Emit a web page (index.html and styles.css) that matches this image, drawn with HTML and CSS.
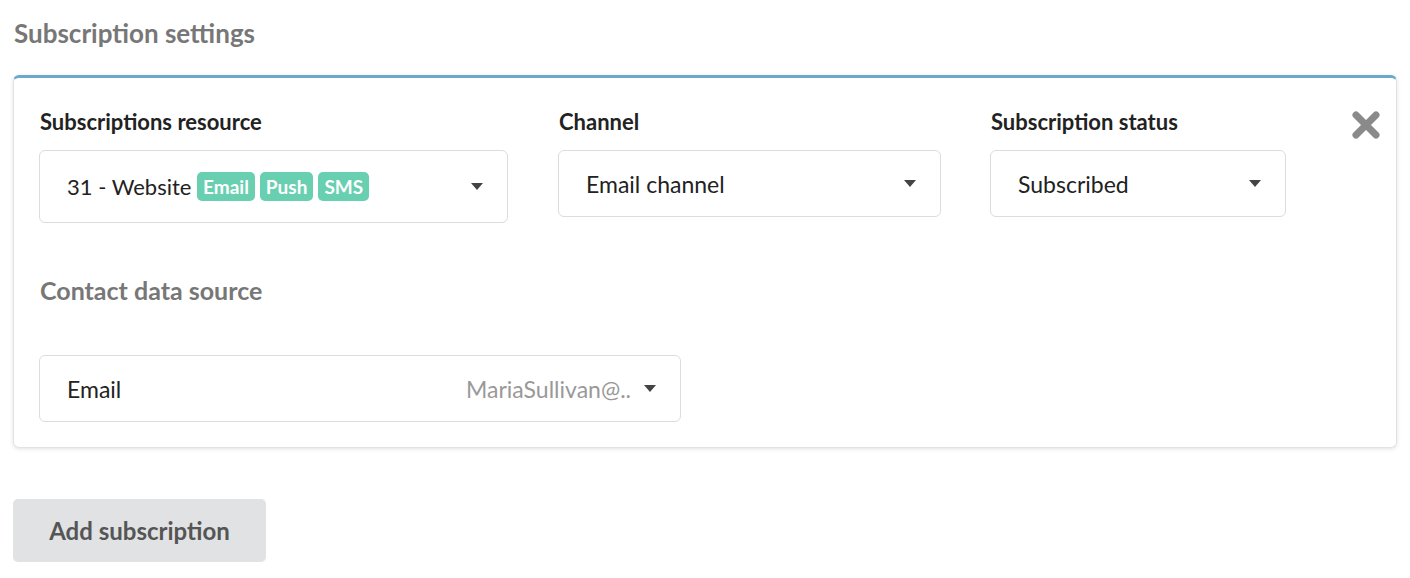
FILE: index.html
```html
<!DOCTYPE html>
<html lang="en">
<head>
    <meta charset="UTF-8">
    <title>Subscription settings</title>
    <link rel="stylesheet" href="styles.css">
</head>
<body>
    <div class="page">
        <h2 class="section-title">Subscription settings</h2>

        <div class="card">
            <div class="row">
                <div class="field field-resource">
                    <label class="field-label">Subscriptions resource</label>
                    <div class="select select-tall">
                        <span class="select-value">31 - Website
                            <span class="badge">Email</span><span class="badge">Push</span><span class="badge">SMS</span>
                        </span>
                        <span class="caret"></span>
                    </div>
                </div>
                <div class="field field-channel">
                    <label class="field-label">Channel</label>
                    <div class="select">
                        <span class="select-value">Email channel</span>
                        <span class="caret"></span>
                    </div>
                </div>
                <div class="field field-status">
                    <label class="field-label">Subscription status</label>
                    <div class="select">
                        <span class="select-value">Subscribed</span>
                        <span class="caret"></span>
                    </div>
                </div>
                <button class="remove" title="Remove">
                    <svg width="30" height="30" viewBox="0 0 30 30">
                        <path d="M5 5 L25 25 M25 5 L5 25" stroke="#8a8a8a" stroke-width="7" stroke-linecap="round"/>
                    </svg>
                </button>
            </div>

            <h3 class="sub-title">Contact data source</h3>

            <div class="select select-contact">
                <span class="select-value">Email</span>
                <span class="select-hint">MariaSullivan@..</span>
                <span class="caret caret-small"></span>
            </div>
        </div>

        <button class="btn-add">Add subscription</button>
    </div>
</body>
</html>
```

FILE: styles.css
```css
* {
    margin: 0;
    padding: 0;
    box-sizing: border-box;
}

body {
    background: #fff;
    font-family: 'Source Sans Pro', Lato, 'Liberation Sans', sans-serif;
    color: #222;
}

.page {
    padding: 18px 13px 16px 13px;
    width: 1410px;
}

.section-title {
    font-size: 26px;
    font-weight: 700;
    color: #777;
    line-height: 30px;
    margin-bottom: 27px;
    padding-left: 1px;
}

.card {
    border: 1px solid #e2e2e2;
    border-top: 3px solid #6aa8cc;
    border-radius: 6px;
    box-shadow: 0 1px 4px rgba(0, 0, 0, 0.12);
    padding: 32px 25px 25px 25px;
}

.row {
    display: flex;
    align-items: flex-start;
    gap: 50px;
    position: relative;
}

.field-resource { width: 469px; }
.field-channel { width: 383px; margin-right: -1px; }
.field-status { width: 296px; }

.field-label {
    display: block;
    font-size: 22px;
    font-weight: 700;
    color: #222;
    line-height: 24px;
    margin-bottom: 16px;
    padding-left: 1px;
}

.select {
    display: flex;
    align-items: center;
    height: 67px;
    border: 1px solid #dcdcdc;
    border-radius: 6px;
    padding: 0 24px 0 27px;
    font-size: 23px;
    color: #222;
}

.select-tall {
    height: 73px;
}

.select-value {
    flex: 1;
    white-space: nowrap;
}

.select-tall .select-value {
    font-size: 22px;
}

.badge {
    display: inline-block;
    background: #68cfb0;
    color: #fff;
    font-size: 19px;
    font-weight: 700;
    line-height: 29px;
    padding: 0 6px;
    border-radius: 5px;
    margin-right: 5px;
    vertical-align: 1px;
}

.caret {
    width: 0;
    height: 0;
    border-left: 6px solid transparent;
    border-right: 6px solid transparent;
    border-top: 7px solid #444;
}

.caret-small {
    margin-left: 13px;
}

.remove {
    position: absolute;
    right: -10px;
    top: 0;
    background: none;
    border: none;
    cursor: pointer;
}

.sub-title {
    font-size: 25px;
    font-weight: 700;
    color: #777;
    line-height: 28px;
    margin-top: 53px;
    margin-bottom: 51px;
    padding-left: 1px;
}

.select-contact {
    width: 642px;
}

.select-hint {
    color: #999;
    font-size: 23px;
}

.btn-add {
    margin-top: 51px;
    width: 253px;
    height: 63px;
    border: none;
    border-radius: 5px;
    background: #e1e2e4;
    color: #555;
    font-family: inherit;
    font-size: 24px;
    font-weight: 700;
    cursor: pointer;
}
```
